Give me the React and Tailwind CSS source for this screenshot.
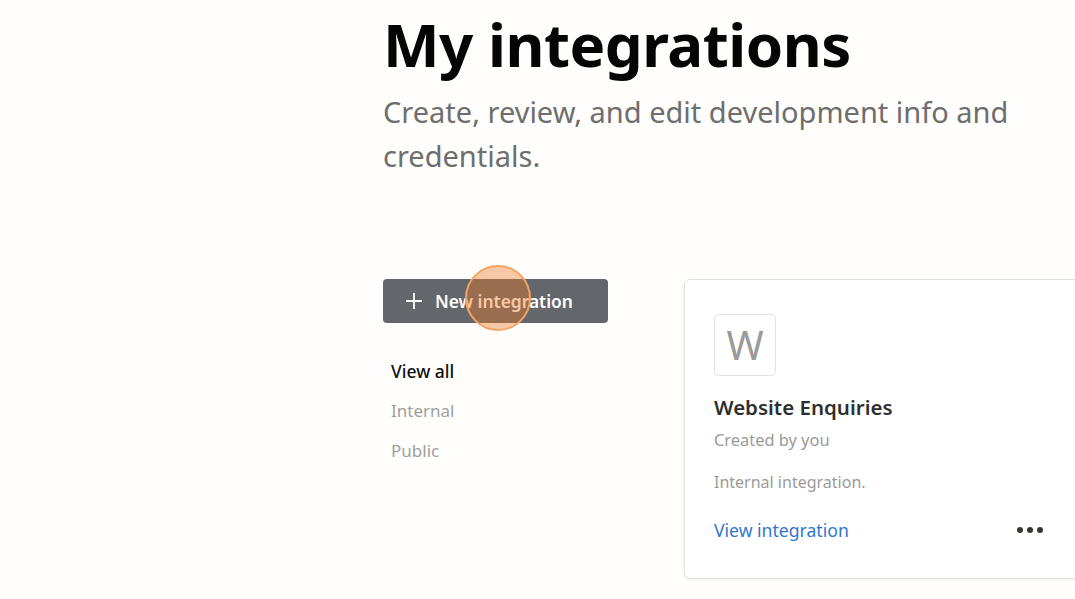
import React from "react";

export default function App() {
  return (
    <div
      className="w-[1075px] h-[599px] overflow-hidden bg-[#fffefc] relative"
      style={{ fontFamily: '"Noto Sans", "Open Sans", sans-serif' }}
    >
      <div className="pl-[383px] pt-[6px]">
        <h1 className="text-[60px] leading-[76px] font-bold text-[#050505] tracking-[-0.5px]">
          My integrations
        </h1>
        <p className="mt-[8px] text-[29px] leading-[44px] text-[#6e6e6e] w-[680px]">
          Create, review, and edit development info and credentials.
        </p>
        <div className="mt-[101px] flex">
          <div className="w-[301px] shrink-0">
            <button className="relative w-[225px] h-[44px] rounded-[4px] bg-[#63666a] flex items-center pl-[22px] gap-[12px] text-white">
              <svg width="18" height="18" viewBox="0 0 18 18" fill="none" stroke="white" strokeWidth="1.8">
                <path d="M9 1v16M1 9h16" />
              </svg>
              <span className="text-[17.4px] font-semibold">New integration</span>
              <span className="absolute left-[82px] top-[-14px] w-[66px] h-[66px] rounded-full bg-[rgba(236,120,36,0.4)] border-2 border-[#f4a462]" />
            </button>
            <div className="mt-[36px] pl-[8px] flex flex-col text-[17px]">
              <span className="h-[40px] leading-[24px] font-medium text-[#111] text-[17.5px]">View all</span>
              <span className="h-[40px] leading-[24px] text-[#a09f9c]">Internal</span>
              <span className="h-[40px] leading-[24px] text-[#a09f9c]">Public</span>
            </div>
          </div>
          <div className="w-[420px] h-[300px] shrink-0 bg-white border border-[#e3e2e0] rounded-[6px] shadow-[0_1px_3px_rgba(0,0,0,0.06)] pt-[34px] pl-[29px] pr-[60px]">
            <div className="w-[62px] h-[62px] border border-[#e3e2e0] rounded-[5px] flex items-center justify-center text-[40px] text-[#9b9a97]">
              W
            </div>
            <div className="mt-[17px] text-[20.5px] font-semibold text-[#2f2f2f] leading-[28px]">
              Website Enquiries
            </div>
            <div className="mt-[7px] text-[16.4px] text-[#9b9a97] leading-[24px]">Created by you</div>
            <div className="mt-[18px] text-[16px] text-[#9b9a97] leading-[24px]">Internal integration.</div>
            <div className="mt-[24px] flex items-center justify-between">
              <span className="text-[17.6px] text-[#2f77d0] leading-[24px]">View integration</span>
              <span className="flex gap-[4px]">
                <span className="w-[6px] h-[6px] rounded-full bg-[#37352f]" />
                <span className="w-[6px] h-[6px] rounded-full bg-[#37352f]" />
                <span className="w-[6px] h-[6px] rounded-full bg-[#37352f]" />
              </span>
            </div>
          </div>
        </div>
      </div>
    </div>
  );
}
